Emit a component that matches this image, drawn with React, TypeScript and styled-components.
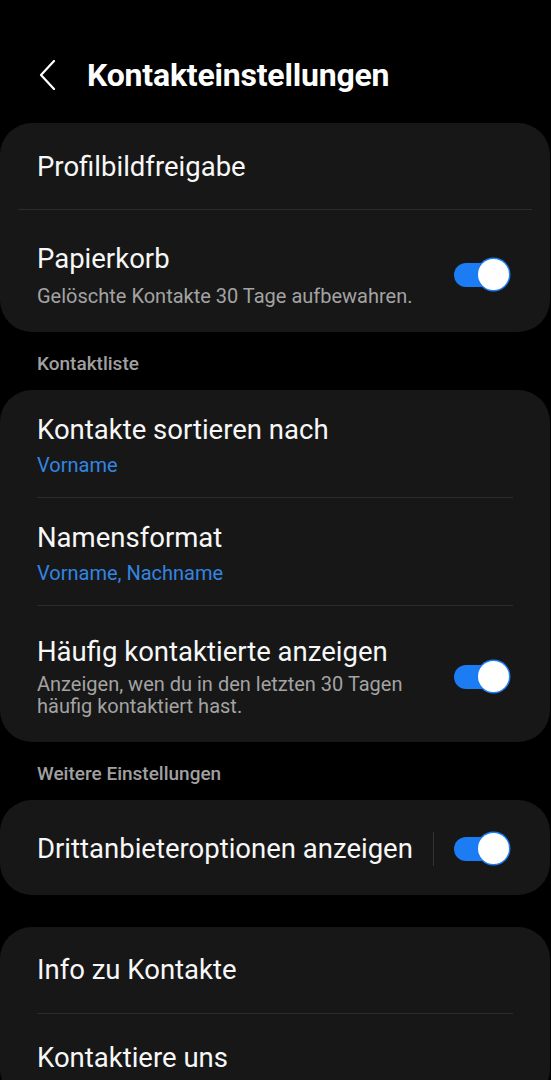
import styled, { createGlobalStyle } from "styled-components";

const GlobalStyle = createGlobalStyle`
  html, body {
    margin: 0;
    padding: 0;
    background: #000;
  }
  body {
    font-family: Roboto, "Noto Sans", "Liberation Sans", sans-serif;
    color: #fafafa;
    -webkit-font-smoothing: antialiased;
  }
`;

const Screen = styled.div`
  width: 551px;
  height: 1080px;
  overflow: hidden;
  background: #000;
`;

const Header = styled.div`
  display: flex;
  align-items: center;
  height: 123px;
  padding: 26px 0 0 38px;
  box-sizing: border-box;
`;

const BackButton = styled.span`
  display: flex;
  width: 49px;
  svg {
    width: 20px;
    height: 30px;
  }
`;

const Title = styled.h1`
  margin: 0;
  font-size: 32px;
  font-weight: 700;
  letter-spacing: -0.2px;
  color: #fff;
`;

const Card = styled.div<{ $gapTop?: number }>`
  background: #171717;
  border-radius: 32px;
  margin-right: 1px;
  margin-top: ${({ $gapTop }) => $gapTop ?? 0}px;
  display: flex;
  flex-direction: column;
`;

const Row = styled.div<{ $pt: number; $pb: number }>`
  display: flex;
  align-items: center;
  padding: ${({ $pt }) => $pt}px 46px ${({ $pb }) => $pb}px 37px;
`;

const RowText = styled.div`
  flex: 1;
  display: flex;
  flex-direction: column;
  min-width: 0;
`;

const RowTitle = styled.div`
  font-size: 27.5px;
  line-height: 32px;
  color: #f7f7f7;
`;

const RowSub = styled.div<{ $accent?: boolean; $gap?: number }>`
  margin-top: ${({ $gap }) => $gap ?? 8}px;
  font-size: 20px;
  line-height: 22px;
  color: ${({ $accent }) => ($accent ? "#3385e2" : "#a3a3a3")};
`;

const Divider = styled.div<{ $inset: number }>`
  height: 1px;
  background: #2c2c2c;
  margin: 0 ${({ $inset }) => $inset}px;
`;

const SectionLabel = styled.div`
  padding: 21px 37px 15px;
  font-size: 19px;
  line-height: 22px;
  font-weight: 500;
  color: #a0a0a0;
`;

const VerticalRule = styled.span`
  width: 1px;
  height: 34px;
  background: #333;
  margin-right: 20px;
`;

const Track = styled.span`
  position: relative;
  display: inline-block;
  width: 50px;
  height: 24px;
  border-radius: 12px;
  background: #1b7cf3;
  flex-shrink: 0;
`;

const Thumb = styled.span`
  position: absolute;
  right: -5px;
  top: -4px;
  width: 31px;
  height: 31px;
  border-radius: 50%;
  background: #fff;
  box-shadow: 0 0 0 1.5px #1b7cf3;
`;

const Toggle = () => (
  <Track>
    <Thumb />
  </Track>
);

const Chevron = () => (
  <svg viewBox="0 0 20 30" fill="none">
    <path
      d="M16 1 L3 15 L16 29"
      stroke="#fff"
      strokeWidth="2.2"
      strokeLinecap="round"
      strokeLinejoin="round"
    />
  </svg>
);

export default function App() {
  return (
    <Screen>
      <GlobalStyle />
      <Header>
        <BackButton>
          <Chevron />
        </BackButton>
        <Title>Kontakteinstellungen</Title>
      </Header>

      <Card>
        <Row $pt={28} $pb={26}>
          <RowText>
            <RowTitle>Profilbildfreigabe</RowTitle>
          </RowText>
        </Row>
        <Divider $inset={18} />
        <Row $pt={33} $pb={25}>
          <RowText>
            <RowTitle>Papierkorb</RowTitle>
            <RowSub $gap={10}>Gelöschte Kontakte 30 Tage aufbewahren.</RowSub>
          </RowText>
          <Toggle />
        </Row>
      </Card>

      <SectionLabel>Kontaktliste</SectionLabel>
      <Card>
        <Row $pt={24} $pb={21}>
          <RowText>
            <RowTitle>Kontakte sortieren nach</RowTitle>
            <RowSub $accent>Vorname</RowSub>
          </RowText>
        </Row>
        <Divider $inset={37} />
        <Row $pt={24} $pb={21}>
          <RowText>
            <RowTitle>Namensformat</RowTitle>
            <RowSub $accent>Vorname, Nachname</RowSub>
          </RowText>
        </Row>
        <Divider $inset={37} />
        <Row $pt={30} $pb={25}>
          <RowText>
            <RowTitle>Häufig kontaktierte anzeigen</RowTitle>
            <RowSub $gap={5}>
              Anzeigen, wen du in den letzten 30 Tagen
              <br />
              häufig kontaktiert hast.
            </RowSub>
          </RowText>
          <Toggle />
        </Row>
      </Card>

      <SectionLabel>Weitere Einstellungen</SectionLabel>
      <Card>
        <Row $pt={32} $pb={29}>
          <RowText>
            <RowTitle>Drittanbieteroptionen anzeigen</RowTitle>
          </RowText>
          <VerticalRule />
          <Toggle />
        </Row>
      </Card>

      <Card $gapTop={32}>
        <Row $pt={27} $pb={27}>
          <RowText>
            <RowTitle>Info zu Kontakte</RowTitle>
          </RowText>
        </Row>
        <Divider $inset={37} />
        <Row $pt={28} $pb={27}>
          <RowText>
            <RowTitle>Kontaktiere uns</RowTitle>
          </RowText>
        </Row>
      </Card>
    </Screen>
  );
}
